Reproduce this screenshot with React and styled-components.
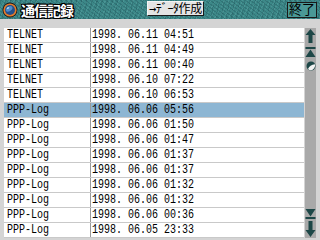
import React from 'react'
import styled, { createGlobalStyle } from 'styled-components'

const rows = [
  ['TELNET', '1998. 06.11 04:51'],
  ['TELNET', '1998. 06.11 04:49'],
  ['TELNET', '1998. 06.11 00:40'],
  ['TELNET', '1998. 06.10 07:22'],
  ['TELNET', '1998. 06.10 06:53'],
  ['PPP-Log', '1998. 06.06 05:56'],
  ['PPP-Log', '1998. 06.06 01:50'],
  ['PPP-Log', '1998. 06.06 01:47'],
  ['PPP-Log', '1998. 06.06 01:37'],
  ['PPP-Log', '1998. 06.06 01:37'],
  ['PPP-Log', '1998. 06.06 01:32'],
  ['PPP-Log', '1998. 06.06 01:32'],
  ['PPP-Log', '1998. 06.06 00:36'],
  ['PPP-Log', '1998. 06.05 23:33'],
]

const ICON = '#1d4747'

const GlobalStyle = createGlobalStyle`
  body {
    margin: 0;
    background: #d4d4d4;
  }
`

const Screen = styled.div`
  width: 320px;
  height: 240px;
  overflow: hidden;
  background: #d4d4d4;
  display: flex;
  flex-direction: column;
`

const TitleBar = styled.div`
  height: 19px;
  display: grid;
  grid-template-columns: 147px auto 1fr auto;
  align-items: center;
  background-color: #3c8888;
  background-image:
    repeating-linear-gradient(37deg, rgba(20, 60, 70, 0.25) 0 1px, transparent 1px 3px),
    repeating-linear-gradient(-61deg, rgba(120, 190, 190, 0.22) 0 1px, transparent 1px 4px),
    repeating-linear-gradient(101deg, rgba(10, 40, 50, 0.18) 0 1px, transparent 1px 5px);
  padding-right: 3px;
`

const TitleGroup = styled.div`
  display: flex;
  align-items: center;
  gap: 3px;
  padding-left: 2px;
`

const Title = styled.span`
  font-family: "Noto Sans CJK JP", sans-serif;
  font-size: 14px;
  letter-spacing: -1px;
  font-weight: 700;
  line-height: 16px;
  color: #fff;
  text-shadow: 1px 0 0 #000, -1px 0 0 #000, 0 1px 0 #000, 0 -1px 0 #000,
    1px 1px 0 #000, -1px -1px 0 #000, 1px -1px 0 #000, -1px 1px 0 #000;
`

const BarButton = styled.div`
  height: ${({ tall }) => (tall ? 16 : 15)}px;
  margin-top: ${({ tall }) => (tall ? 0 : -2)}px;
  box-sizing: border-box;
  display: flex;
  align-items: center;
  justify-content: center;
  padding: 0 1px;
  font-family: "DejaVu Sans Mono", "Noto Sans CJK JP", sans-serif;
  font-size: ${({ tall }) => (tall ? 13 : 12)}px;
  letter-spacing: ${({ tall }) => (tall ? 0 : -0.4)}px;
  line-height: 1;
  color: #000;
  background: ${({ teal }) => (teal ? '#4a9896' : '#e4e4e4')};
  border: 1px solid #1a1a1a;
  border-top-color: ${({ teal }) => (teal ? '#1a1a1a' : '#f4f4f4')};
  border-left-color: ${({ teal }) => (teal ? '#1a1a1a' : '#f4f4f4')};
  white-space: nowrap;
`

const Body = styled.div`
  flex: 1;
  display: flex;
  padding: 9px 4px 2px 4px;
  gap: 1px;
`

const List = styled.div`
  flex: 1;
  background: #fff;
  display: flex;
  flex-direction: column;
`

const Row = styled.div`
  height: 15px;
  box-sizing: border-box;
  border-bottom: 1px solid #c9c9c9;
  display: grid;
  grid-template-columns: 86px 1px 1fr;
  background: ${({ selected }) => (selected ? '#8db6d3' : '#fff')};
`

const Cell = styled.div`
  display: flex;
  align-items: center;
  padding-left: ${({ first }) => (first ? 3 : 1)}px;
`

const CellText = styled.span`
  white-space: pre;
  font-family: "Liberation Mono", monospace;
  font-size: 13px;
  line-height: 14px;
  color: #000;
  transform: scaleX(0.77);
  transform-origin: left center;
`

const Divider = styled.div`
  background: #9a9a9a;
`

const ScrollBar = styled.div`
  width: 11px;
  background: #a9a9a9;
  display: flex;
  flex-direction: column;
  justify-content: space-between;
  align-items: center;
`

const ScrollGroup = styled.div`
  display: flex;
  flex-direction: column;
  align-items: center;
  gap: ${({ gap }) => gap}px;
`

const Globe = () => (
  <svg width="16" height="16" viewBox="0 0 16 16">
    <circle cx="8" cy="8" r="7.5" fill="#1a1a1a" />
    <circle cx="8" cy="8" r="6.6" fill="#e37c2c" />
    <circle cx="8" cy="8" r="5" fill="#24508c" />
    <ellipse cx="7.2" cy="7" rx="3.6" ry="2.3" fill="#4f8ccc" transform="rotate(-35 7 7)" />
    <ellipse cx="6" cy="6" rx="1.4" ry="0.8" fill="#b0d4f2" transform="rotate(-35 6 6)" />
  </svg>
)

const UpArrow = () => (
  <svg width="11" height="16" viewBox="0 0 11 16">
    <path d="M5.5 1 L10.5 7 L7.5 7 L7.5 15 L3.5 15 L3.5 7 L0.5 7 Z" fill={ICON} />
  </svg>
)

const DownArrow = () => (
  <svg width="11" height="18" viewBox="0 0 11 18">
    <path d="M5.5 17 L10.5 10 L7.5 10 L7.5 1 L3.5 1 L3.5 10 L0.5 10 Z" fill={ICON} />
  </svg>
)

const ToTop = () => (
  <svg width="11" height="11" viewBox="0 0 11 11">
    <rect x="0.5" y="0" width="10" height="2" fill={ICON} />
    <path d="M5.5 2.5 L10.5 10 L0.5 10 Z" fill={ICON} />
  </svg>
)

const ToBottom = () => (
  <svg width="11" height="11" viewBox="0 0 11 11">
    <path d="M0.5 1 L10.5 1 L5.5 8.5 Z" fill={ICON} />
    <rect x="0.5" y="9" width="10" height="2" fill={ICON} />
  </svg>
)

const Thumb = () => (
  <svg width="10" height="10" viewBox="0 0 10 10">
    <circle cx="5" cy="5" r="4.5" fill={ICON} />
    <path d="M2 8 C3 5.5 5.5 3.5 9 3.2 C9.5 5.5 8 8.5 5 9.3 C3.8 9.5 2.8 9 2 8 Z" fill="#f2f2f2" />
  </svg>
)

const App = () => (
  <>
    <GlobalStyle />
    <Screen>
      <TitleBar>
        <TitleGroup>
          <Globe />
          <Title>通信記録</Title>
        </TitleGroup>
        <BarButton>→ﾃﾞｰﾀ作成</BarButton>
        <span />
        <BarButton tall teal>終了</BarButton>
      </TitleBar>
      <Body>
        <List>
          {rows.map(([name, date], i) => (
            <Row key={i} selected={i === 5}>
              <Cell first><CellText>{name}</CellText></Cell>
              <Divider />
              <Cell><CellText>{date}</CellText></Cell>
            </Row>
          ))}
        </List>
        <ScrollBar>
          <ScrollGroup gap={3}>
            <UpArrow />
            <ToTop />
            <Thumb />
          </ScrollGroup>
          <ScrollGroup gap={1}>
            <ToBottom />
            <DownArrow />
          </ScrollGroup>
        </ScrollBar>
      </Body>
    </Screen>
  </>
)

export default App
